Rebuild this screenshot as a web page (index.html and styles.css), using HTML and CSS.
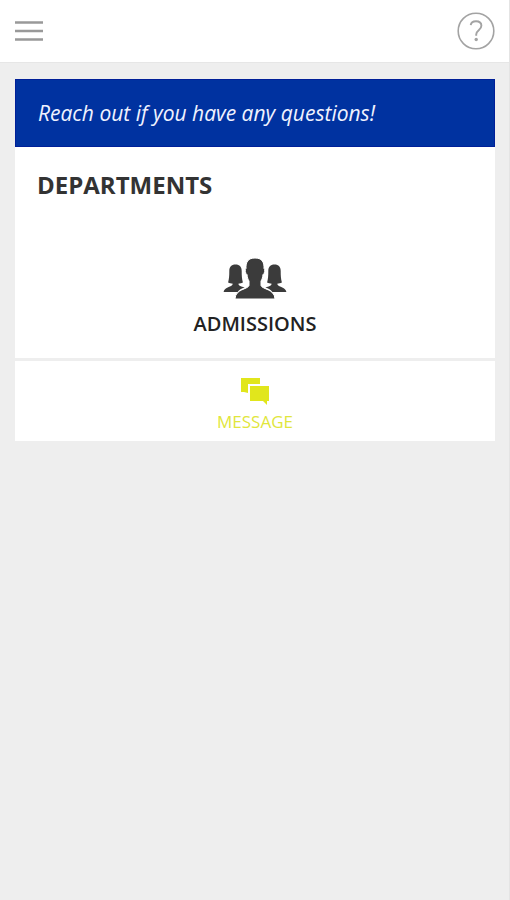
FILE: index.html
```
<!DOCTYPE html>
<html lang="en">
<head>
    <meta charset="UTF-8">
    <meta name="viewport" content="width=device-width, initial-scale=1.0">
    <title>Departments</title>
    <link rel="stylesheet" href="styles.css">
</head>
<body>
    <header class="topbar">
        <button class="icon-button" type="button" aria-label="Menu">
            <svg width="28" height="20" viewBox="0 0 28 20">
                <path d="M0 1.5h28M0 10h28M0 18.5h28" fill="none" stroke="#999" stroke-width="2.6"/>
            </svg>
        </button>
        <button class="icon-button" type="button" aria-label="Help">
            <svg width="38" height="38" viewBox="0 0 38 38" fill="none" stroke="#a3a3a3">
                <circle cx="19" cy="19" r="17.8" stroke-width="1.6"/>
                <path d="M13.7 13.2c.3-2.7 2.4-4 5.3-4s5.4 1.5 5.4 4.6c0 4.5-5.2 4.5-5.2 8.7v1.2" stroke-width="1.9"/>
                <circle cx="19.2" cy="27.5" r="1.7" fill="#a3a3a3" stroke="none"/>
            </svg>
        </button>
    </header>

    <main class="content">
        <p class="banner">Reach out if you have any questions!</p>

        <section class="card">
            <h1>Departments</h1>
            <div class="department">
                <svg width="64" height="42" viewBox="0 0 64 42" fill="#3b3b3b">
                    <g id="side-person">
                        <path d="M12.5 7.5c-4.2 0-6.2 2.5-6.2 6.500 0 4.500-.2 8-1.200 11.500 1.500.8 3 1 4.400 1v1.200c-1.500 2.400-8.400 2.300-8.900 7.300h14c1.500-2 4-3.600 7-4.400-1.700-.8-5-1.300-6-2.900v-1.200c1.400 0 2.900-.2 4.300-1-1-3.500-1.200-7-1.200-11.500 0-4-2-6.500-6.200-6.500z"/>
                    </g>
                    <use href="#side-person" transform="matrix(-1 0 0 1 64 0)"/>
                    <path d="M32 1c-6.800 0-9.300 4-9 10.500-1.400.5-.7 5.500 1 6.100.3 2.800 1 5 2 6.400v4.500c-1.500 4.200-13.500 3.200-14 13.500h40c-.5-10.300-12.500-9.300-14-13.500v-4.500c1-1.400 1.700-3.600 2-6.400 1.700-.6 2.400-5.600 1-6.100.3-6.500-2.200-10.500-9-10.500z" stroke="#fff" stroke-width="1"/>
                </svg>
                <h2>Admissions</h2>
            </div>
            <button class="message" type="button">
                <svg width="30" height="28" viewBox="0 0 30 28" fill="#e1e61c">
                    <path d="M1 1h19v6h-12v9l-4-1h-3z"/>
                    <path d="M10 9h19v15h-2v4l-4-4h-13z"/>
                </svg>
                <span>Message</span>
            </button>
        </section>
    </main>
</body>
</html>
```
FILE: styles.css
```
* {
    box-sizing: border-box;
}
body {
    margin: 0;
    min-height: 100vh;
    background: #eee;
    border-right: 1px solid #e4e4e4;
    color: #333;
    font-family: "Open Sans", "Noto Sans", sans-serif;
}
button {
    border: none;
    background: none;
    font-family: inherit;
    cursor: pointer;
}
svg {
    display: block;
}
.topbar {
    display: flex;
    align-items: center;
    justify-content: space-between;
    height: 63px;
    padding: 0 14px 0 15px;
    background: #fff;
    border-bottom: 1px solid #e6e6e6;
}
.icon-button {
    padding: 0;
}
.content {
    padding: 16px 14px 16px 15px;
}
.banner {
    margin: 0;
    padding: 20px 22px;
    background: #0032a0;
    border: 1px solid #001f98;
    color: #f0f2ff;
    font-size: 21px;
    font-style: italic;
    line-height: 26px;
}
.card {
    background: #fff;
}
.card h1 {
    margin: 0;
    padding: 22px;
    font-size: 24px;
    font-weight: 700;
    line-height: 32px;
    text-transform: uppercase;
}
.department {
    display: flex;
    flex-direction: column;
    align-items: center;
    gap: 12px;
    padding: 34px 22px 21px;
}
.department h2 {
    margin: 0;
    color: #222;
    font-size: 20px;
    font-weight: 600;
    line-height: 26px;
    text-transform: uppercase;
}
.message {
    display: flex;
    flex-direction: column;
    align-items: center;
    gap: 6px;
    width: 100%;
    padding: 16px 22px 8px;
    border-top: 3px solid #eee;
    color: #e1e63c;
    font-size: 17px;
    line-height: 22px;
    text-transform: uppercase;
}
```
